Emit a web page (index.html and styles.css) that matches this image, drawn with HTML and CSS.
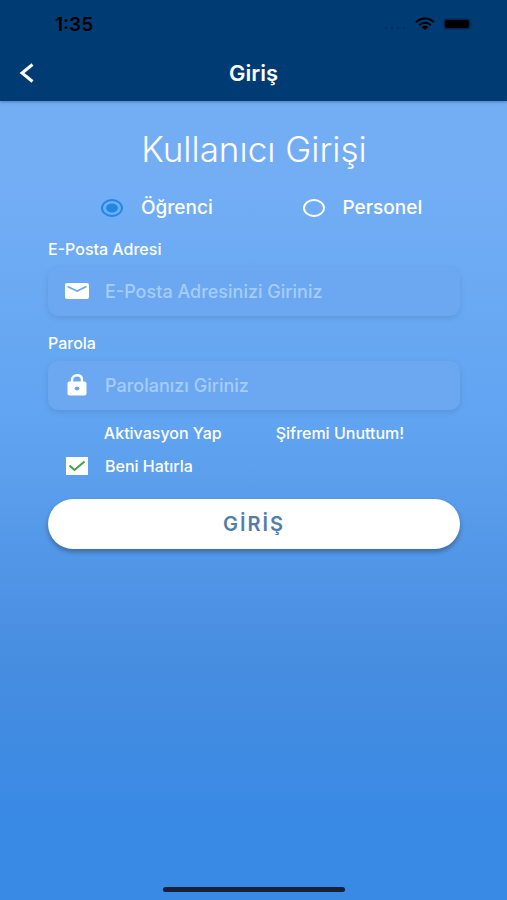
FILE: index.html
```html
<!DOCTYPE html>
<html lang="tr">
<head>
<meta charset="utf-8">
<meta name="viewport" content="width=device-width, initial-scale=1">
<title>Giriş</title>
<link rel="stylesheet" href="styles.css">
</head>
<body>
<header class="header">
  <div class="status">
    <span class="time">1:35</span>
    <span class="status-icons">
      <svg width="24" height="12" viewBox="0 0 24 12" fill="#002f61" aria-hidden="true"><circle cx="3" cy="10" r="1.200"/><circle cx="9" cy="10" r="1.200"/><circle cx="15" cy="10" r="1.200"/><circle cx="21" cy="10" r="1.200"/></svg>
      <svg width="20" height="14" viewBox="0 0 20 14" aria-hidden="true"><g fill="none" stroke="#000" stroke-width="2"><path d="M1 5.200C6 .1 14 .1 19 5.200"/><path d="M4.200 8.200C7.500 4.900 12.500 4.900 15.800 8.200"/></g><path d="M6.600 10.200C8.500 8.400 11.500 8.400 13.400 10.200L10 13z"/></svg>
      <svg width="30" height="12" viewBox="0 0 30 12" aria-hidden="true"><rect x=".5" y=".5" width="27" height="11" rx="3" fill="#002750"/><rect x="2" y="2" width="24" height="8" rx="2"/><path d="M28.500 4v4c1.300-.6 1.300-3.400 0-4z" fill="#002750"/></svg>
    </span>
  </div>
  <nav class="nav">
    <button class="back" type="button" aria-label="Geri"><svg width="16" height="20" viewBox="0 0 16 20" fill="none" stroke="#fff" stroke-width="3" aria-hidden="true"><path d="M13.500 1.500L3 10l10.500 8.500"/></svg></button>
    <h1 class="nav-title">Giriş</h1>
  </nav>
</header>
<main class="main">
  <h2 class="title">Kullanıcı Girişi</h2>
  <form class="form">
    <div class="roles">
      <label class="role"><input class="radio" type="radio" name="role" checked>Öğrenci</label>
      <label class="role"><input class="radio" type="radio" name="role">Personel</label>
    </div>
    <label class="label" for="email">E-Posta Adresi</label>
    <div class="field">
      <svg class="icon" width="26" height="18" viewBox="0 0 26 18" aria-hidden="true"><rect x="1" y="1" width="24" height="16" rx="2" fill="#fff"/><path d="M3.500 4.500L13 9l9.500-4.500" fill="none" stroke="#6ca8f1" stroke-width="1.600"/></svg>
      <input class="input" id="email" type="email" placeholder="E-Posta Adresinizi Giriniz">
    </div>
    <label class="label" for="password">Parola</label>
    <div class="field">
      <svg class="icon" width="26" height="22" viewBox="0 0 26 22" aria-hidden="true"><path d="M8 9V6C8 3 10 1.300 13 1.300S18 3 18 6V9" fill="none" stroke="#fff" stroke-width="2.400"/><rect x="3.500" y="7.500" width="19" height="14" rx="2" fill="#fff"/><ellipse cx="13" cy="14.500" rx="2.300" ry="1.900" fill="#6ca8f1"/></svg>
      <input class="input" id="password" type="password" placeholder="Parolanızı Giriniz">
    </div>
    <div class="links">
      <a href="#aktivasyon">Aktivasyon Yap</a>
      <a href="#sifre">Şifremi Unuttum!</a>
    </div>
    <label class="remember">
      <span class="tick">
        <input class="checkbox" type="checkbox" checked>
        <svg class="check" viewBox="0 0 22 18" fill="none" stroke="#43a047" stroke-width="2" aria-hidden="true"><path d="M3.500 8.500L8.500 13 18.500 4.500"/></svg>
      </span>
      Beni Hatırla
    </label>
    <button class="submit" type="submit">GİRİŞ</button>
  </form>
  <div class="home-bar"></div>
</main>
</body>
</html>
```
FILE: styles.css
```css
* {
  box-sizing: border-box;
}

body {
  margin: 0;
  min-height: 100vh;
  display: flex;
  flex-direction: column;
  font-family: Inter, "Noto Sans", sans-serif;
  font-size: 16px;
  font-weight: 500;
  color: #fff;
}

.header {
  background: #003c73;
  padding-bottom: 3px;
  box-shadow: 0 1px 3px rgba(0, 0, 0, 0.3);
  z-index: 1;
}

.status {
  height: 48px;
  padding: 0 34px 0 55px;
  display: flex;
  align-items: center;
  justify-content: space-between;
  color: #000;
}

.time {
  font-size: 19px;
  font-weight: 600;
}

.status-icons {
  display: flex;
  align-items: center;
  gap: 8px;
}

.nav {
  height: 50px;
  display: grid;
  grid-template-columns: 56px 1fr 56px;
  align-items: center;
}

.back {
  height: 48px;
  padding: 0 0 0 19px;
  border: 0;
  background: none;
  display: flex;
  align-items: center;
}

.nav-title {
  margin: 0;
  text-align: center;
  font-size: 22px;
  font-weight: 600;
}

.main {
  flex: 1;
  display: flex;
  flex-direction: column;
  padding: 28px 47px 8px 48px;
  background: linear-gradient(#73aef5 10%, #61a4f1 40%, #478de0 70%, #398ae5 90%);
}

.title {
  margin: 0;
  text-align: center;
  font-size: 35px;
  line-height: 40px;
  font-weight: 300;
}

.form {
  display: flex;
  flex-direction: column;
}

.roles {
  display: grid;
  grid-template-columns: 1fr 1fr;
  gap: 44px;
  padding: 27px 0 21px 53px;
}

.role {
  display: flex;
  align-items: center;
  gap: 18px;
  font-size: 19px;
  line-height: 24px;
}

.radio {
  appearance: none;
  flex: none;
  width: 22px;
  height: 18px;
  margin: 0;
  border: 2px solid #fff;
  border-radius: 50%;
}

.radio:checked {
  border-color: #1e88e5;
  background: radial-gradient(closest-side, #1e88e5 60%, transparent 70%);
}

.label {
  font-size: 16px;
  line-height: 16px;
  margin-bottom: 10px;
}

.field {
  height: 49px;
  margin-bottom: 19px;
  padding: 0 16px 1px;
  display: flex;
  align-items: center;
  gap: 15px;
  border-radius: 10px;
  background: #6ca8f1;
  box-shadow: 0 2px 6px rgba(0, 0, 0, 0.1);
}

.icon {
  flex: none;
}

.input {
  flex: 1;
  min-width: 0;
  padding: 0;
  border: 0;
  outline: 0;
  background: none;
  color: #fff;
  font: inherit;
  font-size: 18px;
}

.input::placeholder {
  color: #a5cdf8;
  opacity: 1;
}

.links {
  display: flex;
  justify-content: center;
  gap: 54px;
  margin-top: -4px;
  font-size: 16px;
  line-height: 16px;
}

.links a {
  color: inherit;
  text-decoration: none;
}

.remember {
  display: flex;
  align-items: center;
  gap: 17px;
  padding: 15px 18px 23px;
  font-size: 16px;
  line-height: 20px;
}

.tick {
  display: grid;
}

.checkbox,
.check {
  grid-area: 1 / 1;
  width: 22px;
  height: 18px;
}

.checkbox {
  appearance: none;
  margin: 0;
  background: #fff;
}

.check {
  pointer-events: none;
}

.submit {
  height: 50px;
  border: 0;
  border-radius: 30px;
  background: #fff;
  color: #527daa;
  box-shadow: 0 3px 5px rgba(0, 0, 0, 0.3);
  font-family: inherit;
  font-size: 20px;
  font-weight: 600;
  letter-spacing: 2px;
}

.home-bar {
  width: 44%;
  height: 5px;
  margin: auto auto 0;
  border-radius: 3px;
  background: #152238;
}
```
